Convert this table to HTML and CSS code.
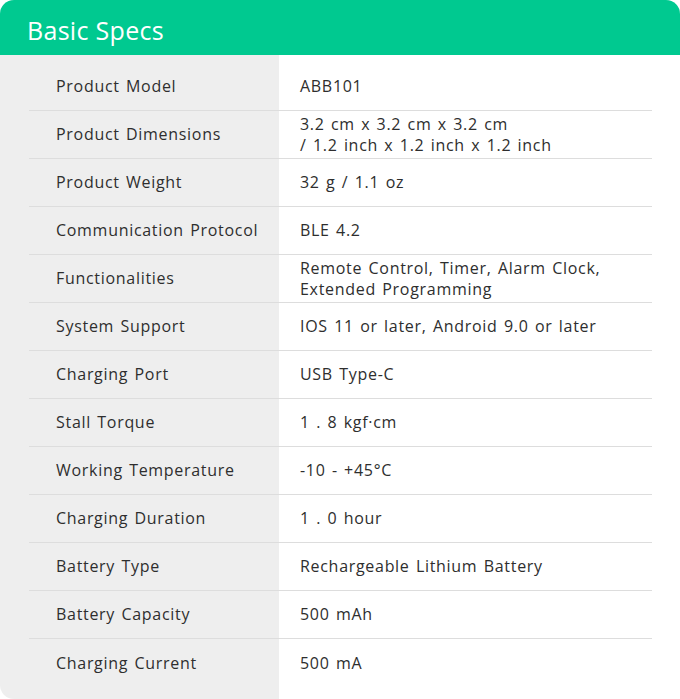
FILE: index.html
```html
<!DOCTYPE html>
<html lang="en">
<head>
<meta charset="utf-8">
<title>Basic Specs</title>
<link rel="stylesheet" href="styles.css">
</head>
<body>
<div class="card">
  <div class="card-header">Basic Specs</div>
  <div class="specs">
    <div class="row"><div class="label">Product Model</div><div class="value">ABB101</div></div>
    <div class="row"><div class="label">Product Dimensions</div><div class="value">3.2 cm x 3.2 cm x 3.2 cm<br>/ 1.2 inch x 1.2 inch x 1.2 inch</div></div>
    <div class="row"><div class="label">Product Weight</div><div class="value">32 g / 1.1 oz</div></div>
    <div class="row"><div class="label">Communication Protocol</div><div class="value">BLE 4.2</div></div>
    <div class="row"><div class="label">Functionalities</div><div class="value">Remote Control, Timer, Alarm Clock,<br>Extended Programming</div></div>
    <div class="row"><div class="label">System Support</div><div class="value">IOS 11 or later, Android 9.0 or later</div></div>
    <div class="row"><div class="label">Charging Port</div><div class="value">USB Type-C</div></div>
    <div class="row"><div class="label">Stall Torque</div><div class="value">1 . 8 kgf·cm</div></div>
    <div class="row"><div class="label">Working Temperature</div><div class="value">-10 - +45°C</div></div>
    <div class="row"><div class="label">Charging Duration</div><div class="value">1 . 0 hour</div></div>
    <div class="row"><div class="label">Battery Type</div><div class="value">Rechargeable Lithium Battery</div></div>
    <div class="row"><div class="label">Battery Capacity</div><div class="value">500 mAh</div></div>
    <div class="row"><div class="label">Charging Current</div><div class="value">500 mA</div></div>
  </div>
</div>
</body>
</html>
```
FILE: styles.css
```css
html, body {
  margin: 0;
  padding: 0;
  background: #ffffff;
}
body {
  font-family: "Open Sans", "Liberation Sans", sans-serif;
  color: #2e2e2e;
}
.card {
  width: 680px;
  height: 699px;
  border-radius: 14px;
  overflow: hidden;
  display: flex;
  flex-direction: column;
}
.card-header {
  height: 55px;
  flex: none;
  display: flex;
  align-items: center;
  background: #00c990;
  color: #ffffff;
  font-size: 25px;
  letter-spacing: 0.3px;
  padding: 5px 0 0 27px;
  box-sizing: border-box;
}
.specs {
  flex: 1;
  background: linear-gradient(to right, #eeeeee 279px, #ffffff 279px);
  padding: 8px 28px 0 29px;
}
.row {
  display: flex;
  align-items: center;
  height: 48px;
  box-sizing: border-box;
  border-bottom: 1px solid #dddddd;
  font-size: 16px;
  letter-spacing: 0.7px;
  word-spacing: 1.5px;
  line-height: 21px;
}
.row:last-child {
  border-bottom: none;
}
.label {
  width: 250px;
  flex: none;
  padding-left: 27px;
  box-sizing: border-box;
}
.value {
  padding-left: 21px;
}
```
